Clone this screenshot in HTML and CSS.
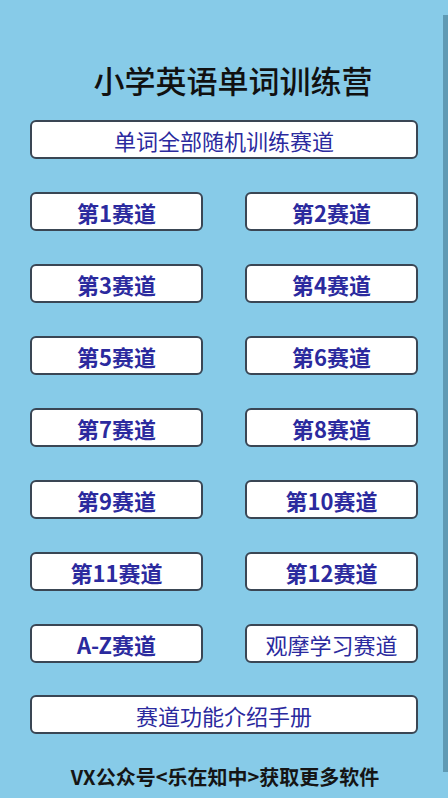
FILE: index.html
```html
<!DOCTYPE html>
<html lang="zh">
<head>
<meta charset="utf-8">
<link rel="stylesheet" href="styles.css">
</head>
<body>
<div class="page">
  <h1 class="title">小学英语单词训练营</h1>
  <div class="btn wide">单词全部随机训练赛道</div>
  <div class="grid">
    <div class="btn bold">第1赛道</div>
    <div class="btn bold">第2赛道</div>
    <div class="btn bold">第3赛道</div>
    <div class="btn bold">第4赛道</div>
    <div class="btn bold">第5赛道</div>
    <div class="btn bold">第6赛道</div>
    <div class="btn bold">第7赛道</div>
    <div class="btn bold">第8赛道</div>
    <div class="btn bold">第9赛道</div>
    <div class="btn bold">第10赛道</div>
    <div class="btn bold">第11赛道</div>
    <div class="btn bold">第12赛道</div>
    <div class="btn bold">A-Z赛道</div>
    <div class="btn">观摩学习赛道</div>
  </div>
  <div class="btn wide">赛道功能介绍手册</div>
  <p class="footer">VX公众号&lt;乐在知中&gt;获取更多软件</p>
</div>
<div class="scrollbar"></div>
</body>
</html>
```
FILE: styles.css
```css
html, body {
  margin: 0;
  padding: 0;
  background: #87cbe8;
  height: 100%;
  overflow: hidden;
}
body {
  font-family: "Noto Sans CJK SC", "Noto Sans", sans-serif;
}
.page {
  width: 388px;
  margin-left: 30px;
  padding-top: 60px;
  display: flex;
  flex-direction: column;
}
.title {
  margin: 0;
  padding-left: 18px;
  font-size: 31px;
  font-weight: 500;
  line-height: 40px;
  text-align: center;
  color: #111;
  height: 60px;
}
.btn {
  box-sizing: border-box;
  height: 39px;
  background: #fff;
  border: 2px solid #3a4654;
  border-radius: 6px;
  display: flex;
  align-items: center;
  justify-content: center;
  font-size: 22px;
  color: #2b2a9e;
  line-height: 1;
}
.bold {
  font-weight: 600;
}
.wide {
  width: 388px;
}
.grid {
  display: grid;
  grid-template-columns: 173px 173px;
  column-gap: 42px;
  row-gap: 33px;
  margin: 33px 0 32px 0;
}
.footer {
  margin: 30px 0 0 0;
  text-align: center;
  font-size: 20px;
  font-weight: 700;
  color: #151515;
  line-height: 26px;
  padding-left: 2px;
}
.scrollbar {
  position: absolute;
  left: 443px;
  top: 15px;
  width: 5px;
  height: 757px;
  background: #5f9ab4;
}
```
